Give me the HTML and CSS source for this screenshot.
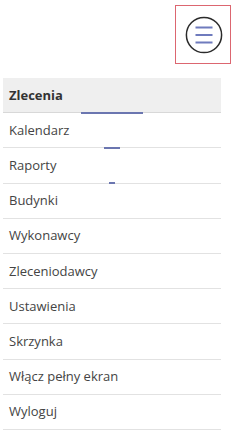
FILE: index.html
```html
<!DOCTYPE html>
<html lang="pl">
<head>
<meta charset="utf-8">
<title>Menu</title>
<link rel="stylesheet" href="styles.css">
</head>
<body>
<div class="page">
  <header class="topbar">
    <button class="burger" aria-label="Menu">
      <svg width="38" height="38" viewBox="0 0 38 38" aria-hidden="true">
        <circle cx="19" cy="19" r="17.6" fill="none" stroke="#2b2b2b" stroke-width="1.5"/>
        <path d="M10.5 11.5h17M10.5 19h17M10.5 26.5h17" stroke="#6f7bbd" stroke-width="1.8" fill="none"/>
      </svg>
    </button>
  </header>
  <nav class="menu">
    <a class="item active bar-wide">Zlecenia</a>
    <a class="item bar-mid">Kalendarz</a>
    <a class="item bar-small">Raporty</a>
    <a class="item">Budynki</a>
    <a class="item">Wykonawcy</a>
    <a class="item">Zleceniodawcy</a>
    <a class="item">Ustawienia</a>
    <a class="item">Skrzynka</a>
    <a class="item">Włącz pełny ekran</a>
    <a class="item">Wyloguj</a>
  </nav>
</div>
</body>
</html>
```

FILE: styles.css
```css
* { box-sizing: border-box; }
html, body { margin: 0; padding: 0; background: #fff; }
body {
  font-family: "Open Sans", "Noto Sans", sans-serif;
  color: #444;
}
.page {
  padding: 5px 14px 0 3px;
}
.topbar {
  display: flex;
  justify-content: flex-end;
  height: 73px;
}
.burger {
  width: 56px;
  height: 59px;
  margin-right: -10px;
  padding: 0;
  background: #fff;
  border: 1.5px solid #dc6670;
  display: flex;
  align-items: center;
  justify-content: center;
  padding-left: 1px;
}
.burger svg { display: block; }
.menu {
  display: flex;
  flex-direction: column;
}
.item {
  position: relative;
  display: flex;
  align-items: center;
  height: 35.2px;
  padding: 0 0 1px 6px;
  font-size: 13px;
  border-bottom: 1px solid #e2e2e2;
}
.item.active {
  background: #efefef;
  font-weight: 700;
  color: #333;
  border-bottom-color: #d8d8d8;
}
.bar-wide::after, .bar-mid::after, .bar-small::after {
  content: "";
  position: absolute;
  left: 50%;
  bottom: -1.5px;
  height: 2px;
  background: #6b76b0;
  transform: translateX(-50%);
}
.bar-wide::after { width: 62px; }
.bar-mid::after { width: 16px; }
.bar-small::after { width: 6px; }
```
